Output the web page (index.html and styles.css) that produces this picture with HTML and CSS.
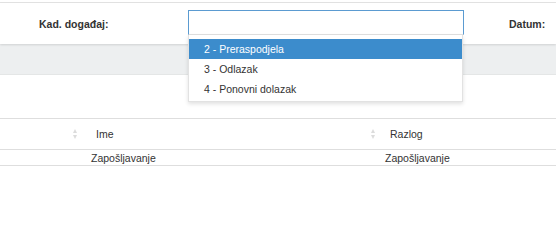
FILE: index.html
```html
<!DOCTYPE html>
<html>
<head>
<meta charset="utf-8">
<link rel="stylesheet" href="styles.css">
</head>
<body>
<div class="page">
  <div class="topline"></div>
  <div class="filter-bar">
    <label class="label">Kad. događaj:</label>
    <div class="select-wrap">
      <div class="select-box"></div>
      <ul class="dropdown">
        <li class="option active">2 - Preraspodjela</li>
        <li class="option">3 - Odlazak</li>
        <li class="option">4 - Ponovni dolazak</li>
      </ul>
    </div>
    <label class="label label-datum">Datum:</label>
  </div>
  <div class="gray-band"></div>
  <div class="spacer"></div>
  <table class="grid">
    <thead>
      <tr>
        <th class="col1"><span class="sort"></span></th>
        <th class="col2">Ime<span class="sort sort-wide"></span></th>
        <th class="col3">Razlog</th>
      </tr>
    </thead>
    <tbody>
      <tr>
        <td></td>
        <td>Zapošljavanje</td>
        <td>Zapošljavanje</td>
      </tr>
    </tbody>
  </table>
</div>
</body>
</html>
```
FILE: styles.css
```css
* { box-sizing: border-box; }
html, body { margin: 0; padding: 0; background: #fff; }
body {
  font-family: "Liberation Sans", Arial, sans-serif;
  font-size: 10.5px;
  color: #333;
  width: 556px;
  height: 200px;
  overflow: hidden;
}
.page { position: relative; }
.topline {
  height: 3px;
  border-bottom: 1px solid #e3e3e3;
}
.filter-bar {
  position: relative;
  z-index: 2;
  display: flex;
  align-items: center;
  height: 41px;
  background: #fff;
  box-shadow: 0 1px 2px rgba(0,0,0,0.12);
  padding-left: 39px;
}
.label {
  font-weight: bold;
  width: 149px;
}
.label-datum {
  width: auto;
  margin-left: 45px;
}
.select-wrap {
  position: relative;
  width: 276px;
  height: 25px;
  margin-top: -2px;
}
.select-box {
  height: 25px;
  border: 1px solid #5b9bd1;
  border-bottom-color: #e0e0e0;
  background: #fff;
}
.dropdown {
  position: absolute;
  left: 0;
  top: 25px;
  width: 275px;
  margin: 0;
  padding: 4px 0 2px;
  list-style: none;
  background: #fff;
  border: 1px solid #e2e2e2;
  border-top: none;
  box-shadow: 0 2px 4px rgba(0,0,0,0.12);
}
.option {
  height: 20px;
  line-height: 20px;
  padding-left: 15px;
  color: #333;
}
.option.active {
  background: #3c8ccc;
  color: #fff;
}
.gray-band {
  height: 31px;
  background: #edeff0;
  border-bottom: 1px solid #e4e6e6;
}
.spacer { height: 43px; }
.grid {
  width: 100%;
  border-collapse: collapse;
  border-top: 1px solid #dedede;
}
.grid th {
  position: relative;
  height: 31px;
  font-weight: normal;
  text-align: left;
  padding: 0 0 0 11px;
  color: #333;
  border-bottom: 1px solid #dedede;
}
.grid td {
  height: 16px;
  padding: 0 0 0 6px;
  border-bottom: 1px solid #dedede;
  line-height: 14px;
}
.col1 { width: 85px; }
.col2 { width: 294px; }
.sort {
  position: absolute;
  right: 7px;
  top: 10px;
  width: 5px;
  height: 10px;
}
.sort-wide { right: 3px; }
.sort::before, .sort::after {
  content: "";
  position: absolute;
  left: 0;
  border-left: 2.5px solid transparent;
  border-right: 2.5px solid transparent;
}
.sort::before {
  top: 0;
  border-bottom: 4px solid #dcdcdc;
}
.sort::after {
  bottom: 0;
  border-top: 4px solid #dcdcdc;
}
```
